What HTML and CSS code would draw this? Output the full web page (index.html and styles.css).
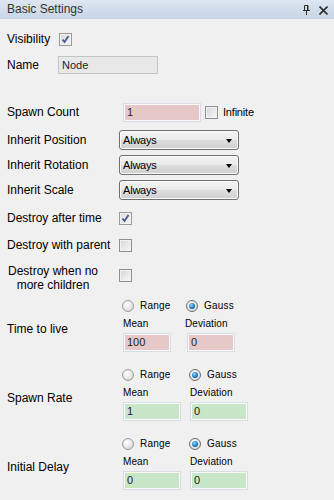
FILE: index.html
```html
<!DOCTYPE html>
<html>
<head>
<meta charset="utf-8">
<link rel="stylesheet" href="styles.css">
</head>
<body>
<div class="panel">
  <div class="titlebar">
    <span class="title">Basic Settings</span>
    <span class="tb-icons">
      <svg class="pin" width="7" height="10" viewBox="0 0 7 10"><path d="M1.5 0.5h3.5v5h-3.5z M4.5 0.5v5 M0 5.5h7 M3.5 6v4" stroke="#2e2e2e" stroke-width="1" fill="none"/></svg>
      <svg class="close" width="9" height="9" viewBox="0 0 9 9"><path d="M0.5 0.5l8 8 M8.5 0.5l-8 8" stroke="#2e2e2e" stroke-width="1.6" fill="none"/></svg>
    </span>
  </div>
  <div class="content">
    <div class="row r-vis">
      <span class="lbl w-vis">Visibility</span>
      <span class="cb checked"><svg width="11" height="11" viewBox="0 0 11 11"><path d="M2.5 5.5l2 2.5l4-6" stroke="#4a5b92" stroke-width="1.8" fill="none"/></svg></span>
    </div>
    <div class="row r-name">
      <span class="lbl w-name">Name</span>
      <span class="tb gray w-namebox">Node</span>
    </div>
    <div class="row r-spawn">
      <span class="lbl w-spawn">Spawn Count</span>
      <span class="tb pink w-count">1</span>
      <span class="cb inf"></span>
      <span class="small-lbl">Infinite</span>
    </div>
    <div class="row r-sel1">
      <span class="lbl w-std">Inherit Position</span>
      <span class="select"><span>Always</span><i class="arrow"></i></span>
    </div>
    <div class="row r-sel">
      <span class="lbl w-std">Inherit Rotation</span>
      <span class="select"><span>Always</span><i class="arrow"></i></span>
    </div>
    <div class="row r-sel">
      <span class="lbl w-std">Inherit Scale</span>
      <span class="select"><span>Always</span><i class="arrow"></i></span>
    </div>
    <div class="row r-dat">
      <span class="lbl w-std">Destroy after time</span>
      <span class="cb checked"><svg width="11" height="11" viewBox="0 0 11 11"><path d="M2.5 5.5l2 2.5l4-6" stroke="#4a5b92" stroke-width="1.8" fill="none"/></svg></span>
    </div>
    <div class="row r-dwp">
      <span class="lbl w-std">Destroy with parent</span>
      <span class="cb"></span>
    </div>
    <div class="row r-dwn">
      <span class="lbl w-std"><span class="two-line">Destroy when no<br>more children</span></span>
      <span class="cb cb-top"></span>
    </div>

    <div class="group g-first">
      <span class="glbl">Time to live</span>
      <div class="gbody">
        <div class="grow radios">
          <span class="gcol c1-narrow"><i class="radio"></i><span class="rt">Range</span></span>
          <span class="gcol"><i class="radio on"></i><span class="rt">Gauss</span></span>
        </div>
        <div class="grow caps">
          <span class="gcol c1-narrow"><span class="cap">Mean</span></span>
          <span class="gcol"><span class="cap cap-dev">Deviation</span></span>
        </div>
        <div class="grow boxes">
          <span class="gcol c1-narrow"><span class="tb pink gbox narrow">100</span></span>
          <span class="gcol"><span class="tb pink gbox narrow">0</span></span>
        </div>
      </div>
    </div>

    <div class="group">
      <span class="glbl">Spawn Rate</span>
      <div class="gbody">
        <div class="grow radios">
          <span class="gcol c1-wide"><i class="radio"></i><span class="rt">Range</span></span>
          <span class="gcol"><i class="radio on"></i><span class="rt">Gauss</span></span>
        </div>
        <div class="grow caps">
          <span class="gcol c1-wide"><span class="cap">Mean</span></span>
          <span class="gcol"><span class="cap">Deviation</span></span>
        </div>
        <div class="grow boxes">
          <span class="gcol c1-wide"><span class="tb green gbox wide">1</span></span>
          <span class="gcol"><span class="tb green gbox wide">0</span></span>
        </div>
      </div>
    </div>

    <div class="group">
      <span class="glbl">Initial Delay</span>
      <div class="gbody">
        <div class="grow radios">
          <span class="gcol c1-wide"><i class="radio"></i><span class="rt">Range</span></span>
          <span class="gcol"><i class="radio on"></i><span class="rt">Gauss</span></span>
        </div>
        <div class="grow caps">
          <span class="gcol c1-wide"><span class="cap">Mean</span></span>
          <span class="gcol"><span class="cap">Deviation</span></span>
        </div>
        <div class="grow boxes">
          <span class="gcol c1-wide"><span class="tb green gbox wide">0</span></span>
          <span class="gcol"><span class="tb green gbox wide">0</span></span>
        </div>
      </div>
    </div>
  </div>
</div>
</body>
</html>
```

FILE: styles.css
```css
html, body {
  margin: 0;
  padding: 0;
  background: #f0f0f0;
}
body {
  font-family: "Liberation Sans", Arial, sans-serif;
  font-size: 12px;
  color: #000;
  width: 334px;
  height: 500px;
  overflow: hidden;
}
.panel {
  display: flex;
  flex-direction: column;
}
.titlebar {
  height: 19px;
  display: flex;
  align-items: center;
  justify-content: space-between;
  padding: 0 6px 0 7px;
  background: linear-gradient(#dde6f1, #c8d5e6);
  box-sizing: border-box;
}
.title {
  color: #333;
  font-size: 12px;
  line-height: 19px;
}
.tb-icons {
  display: flex;
  align-items: center;
  gap: 9px;
}
.tb-icons .pin { margin-top: 1px; }
.tb-icons .close { margin-top: 2px; }

.content {
  padding-left: 7px;
  display: flex;
  flex-direction: column;
}
.row {
  display: flex;
  align-items: center;
  height: 20px;
}
.lbl {
  flex: none;
  white-space: nowrap;
  line-height: 14px;
}
.w-vis { width: 52px; }
.w-name { width: 51px; }
.w-spawn { width: 116px; }
.w-std { width: 112px; }

.r-vis { margin-top: 10px; }
.r-name { margin-top: 6px; }
.r-spawn { margin-top: 27px; }
.r-sel1 { margin-top: 8px; }
.r-sel { margin-top: 5px; }
.r-dat { margin-top: 8px; }
.r-dwp { margin-top: 7px; }
.r-dwn { margin-top: 9px; height: 28px; align-items: flex-start; }

.two-line {
  display: inline-block;
  width: 92px;
  text-align: center;
  line-height: 14px;
}

/* checkbox */
.cb {
  flex: none;
  width: 13px;
  height: 13px;
  box-sizing: border-box;
  border: 1px solid #8e8f8f;
  background: linear-gradient(135deg, #d6d6d6, #f8f8f8);
  box-shadow: inset 0 0 0 1px #f2f2f2;
  display: flex;
  align-items: center;
  justify-content: center;
}
.cb.checked {
  border-color: #9a9a9a;
  background: linear-gradient(135deg, #dcdcdc, #f4f4f4);
}
.cb-top { margin-top: 5px; }
.cb.inf { margin-left: 4px; }
.small-lbl {
  margin-left: 5px;
  font-size: 11px;
  letter-spacing: -0.2px;
}

/* textbox */
.tb {
  flex: none;
  box-sizing: border-box;
  height: 19px;
  line-height: 17px;
  padding-left: 3px;
  font-size: 11px;
  color: #1e1e1e;
  border: 1px solid #d8dde5;
  box-shadow: inset 0 0 0 1px #f9f9f9;
}
.tb.gray {
  background: #e8e8e8;
  border-color: #c4c4c4;
  box-shadow: none;
  height: 18px;
  line-height: 16px;
}
.w-namebox { width: 100px; }
.tb.pink { background: #e6c8c8; }
.tb.green { background: #c8e6c8; }
.w-count { width: 78px; }

/* select */
.select {
  flex: none;
  position: relative;
  box-sizing: border-box;
  width: 120px;
  height: 20px;
  border: 1px solid #707070;
  border-radius: 3px;
  background: linear-gradient(#f3f3f3 0%, #ebebeb 48%, #dddddd 52%, #cfcfcf 100%);
  box-shadow: inset 0 0 0 1px #fbfbfb;
  display: flex;
  align-items: center;
  padding-left: 3px;
  font-size: 11px;
  letter-spacing: -0.2px;
}
.arrow {
  position: absolute;
  right: 6px;
  top: 8px;
  width: 0;
  height: 0;
  border-left: 3.5px solid transparent;
  border-right: 3.5px solid transparent;
  border-top: 4px solid #000;
}

/* groups */
.group {
  display: flex;
  margin-top: 15px;
  height: 54px;
}
.g-first { margin-top: 6px; }
.glbl {
  width: 115px;
  flex: none;
  margin-top: 24px;
  line-height: 14px;
  height: 14px;
}
.gbody {
  display: flex;
  flex-direction: column;
}
.grow {
  display: flex;
}
.grow.radios { height: 15px; align-items: center; }
.grow.caps { height: 16px; margin-top: 2px; align-items: center; }
.grow.boxes { margin-top: 2px; }
.gcol {
  display: flex;
  align-items: center;
}
.c1-narrow { width: 64px; }
.c1-wide { width: 67px; }
.radio {
  display: block;
  width: 12px;
  height: 12px;
  box-sizing: border-box;
  border-radius: 50%;
  border: 1px solid #9b9b9b;
  background: radial-gradient(circle at 40% 35%, #ffffff 0%, #e8e8e8 50%, #c9c9c9 100%);
  position: relative;
}
.radio.on {
  border-color: #6d6d6d;
}
.radio.on::after {
  content: "";
  position: absolute;
  left: 2px;
  top: 2px;
  width: 6px;
  height: 6px;
  border-radius: 50%;
  background: radial-gradient(circle at 40% 35%, #8fd8ff 0%, #1f7cc0 55%, #0b3c6a 100%);
}
.rt {
  margin-left: 6px;
  font-size: 10px;
  letter-spacing: 0.2px;
}
.cap {
  margin-left: 1px;
  font-size: 10px;
  letter-spacing: 0.1px;
}
.cap-dev { margin-left: -1px; }
.gbox { margin-left: 1px; }
.gbox.narrow { width: 48px; }
.gbox.wide { width: 58px; }
```
